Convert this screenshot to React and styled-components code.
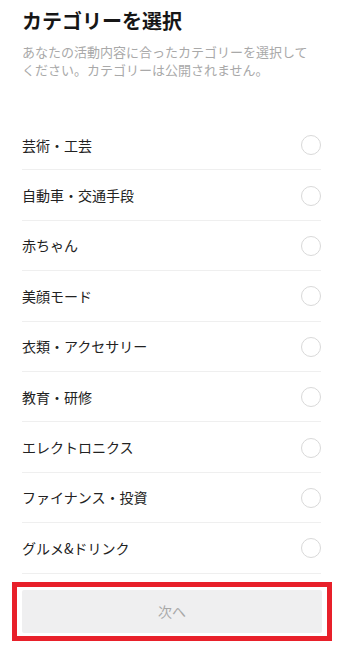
import React, { useState } from "react";
import styled, { createGlobalStyle } from "styled-components";

const GlobalStyle = createGlobalStyle`
  html, body {
    margin: 0;
    padding: 0;
    background: #ffffff;
  }
  body {
    font-family: "Noto Sans CJK JP", "Noto Sans", sans-serif;
  }
`;

const Page = styled.div`
  width: 340px;
  min-height: 662px;
  background: #fff;
  display: flex;
  flex-direction: column;
`;

const Header = styled.div`
  padding: 6px 22px 0;
  height: 120px;
  box-sizing: border-box;
`;

const Title = styled.h1`
  margin: 0;
  font-size: 20px;
  line-height: 30px;
  font-weight: 700;
  color: #161616;
`;

const Lead = styled.p`
  margin: 7px 0 0;
  font-size: 13px;
  line-height: 18px;
  color: #a9a9a9;
`;

const List = styled.ul`
  list-style: none;
  margin: 0;
  padding: 0 19px 0 22px;
`;

const Row = styled.li`
  height: 50.4px;
  box-sizing: border-box;
  display: flex;
  align-items: center;
  justify-content: space-between;
  border-bottom: 1px solid #efefef;
  font-size: 14px;
  color: #222;
  cursor: pointer;
`;

const Radio = styled.span`
  width: 20px;
  height: 20px;
  box-sizing: border-box;
  border-radius: 50%;
  border: 1px solid ${(p) => (p.$on ? "#06c755" : "#d9d9d9")};
  background: ${(p) => (p.$on ? "#06c755" : "#fff")};
  margin-top: 1px;
`;

const Mark = styled.div`
  margin: 8px 8px 0 12px;
  border: 5px solid #e8202a;
  padding: 3px 5px;
`;

const NextButton = styled.button`
  display: block;
  width: 100%;
  height: 43px;
  border: none;
  border-radius: 2px;
  background: #efeff0;
  color: #a8a8a8;
  font-family: inherit;
  font-size: 14px;
`;

const categories = [
  "芸術・工芸",
  "自動車・交通手段",
  "赤ちゃん",
  "美顔モード",
  "衣類・アクセサリー",
  "教育・研修",
  "エレクトロニクス",
  "ファイナンス・投資",
  "グルメ&ドリンク",
];

export default function App() {
  const [picked, setPicked] = useState(null);
  return (
    <Page>
      <GlobalStyle />
      <Header>
        <Title>カテゴリーを選択</Title>
        <Lead>
          あなたの活動内容に合ったカテゴリーを選択してください。カテゴリーは公開されません。
        </Lead>
      </Header>
      <List>
        {categories.map((c) => (
          <Row key={c} onClick={() => setPicked(c)}>
            {c}
            <Radio $on={picked === c} />
          </Row>
        ))}
      </List>
      <Mark>
        <NextButton disabled={!picked}>次へ</NextButton>
      </Mark>
    </Page>
  );
}
